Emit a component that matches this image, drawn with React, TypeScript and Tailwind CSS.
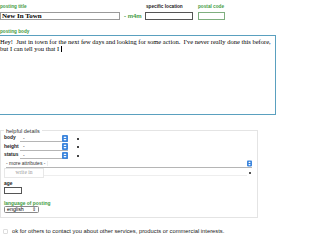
function Stepper({ w = 6 }: { w?: number }) {
  return (
    <svg width={w} height="7" viewBox="0 0 6 7" className="shrink-0">
      <rect x="0" y="0" width="6" height="7" rx="1" fill="#3d86dd" />
      <path d="M3 1.2 L4.6 2.9 L1.4 2.9 Z" fill="#fff" />
      <path d="M3 5.8 L4.6 4.1 L1.4 4.1 Z" fill="#fff" />
    </svg>
  );
}

function DetailRow({ label }: { label: string }) {
  return (
    <div className="flex h-[8.5px] items-center">
      <span className="w-[19px] pl-[3px] text-[4.9px] font-bold leading-none text-[#222]">{label}</span>
      <div className="flex h-[7px] w-[48px] items-center justify-between border-b border-[#b5b5b5]">
        <span className="pl-[3px] text-[5px] leading-none">-</span>
        <Stepper />
      </div>
      <span className="ml-[9px] h-[2px] w-[2px] bg-[#444]" />
    </div>
  );
}

export default function App() {
  return (
    <div className="h-[240px] w-[320px] overflow-hidden bg-white pt-[4px] font-['Liberation_Sans',Arial,sans-serif] text-[#222]">
      {/* top fields */}
      <div className="flex items-end">
        <div className="flex w-[120px] flex-col">
          <span className="h-[6px] text-[4.7px] font-bold leading-[6px] text-[#3f9b3f]">posting title</span>
          <div className="mt-[2px] flex h-[8px] items-center border border-[#9a9a9a] pl-[1px] font-['Liberation_Serif',serif] text-[7px] font-bold leading-none text-black">
            New In Town
          </div>
        </div>
        <span className="mb-[1px] w-[25px] pl-[4px] text-[6px] font-bold leading-[6px] text-[#3f9b3f]">- m4m</span>
        <div className="flex w-[48px] flex-col">
          <span className="h-[6px] pl-[1px] text-[4.7px] font-bold leading-[6px] text-[#222]">specific location</span>
          <div className="mt-[2px] h-[8px] border border-[#555]" />
        </div>
        <div className="ml-[5px] flex w-[27px] flex-col">
          <span className="h-[6px] text-[4.7px] font-bold leading-[6px] text-[#3f9b3f]">postal code</span>
          <div className="mt-[2px] h-[8px] border border-[#7fae7f]" />
        </div>
      </div>

      {/* posting body */}
      <div className="mt-[9px] h-[5px] text-[4.7px] font-bold leading-[5px] text-[#3f9b3f]">posting body</div>
      <div className="-ml-[1px] mt-[1px] h-[80px] w-[277px] overflow-hidden border border-[#5aa0bf] pt-[2px] font-['Liberation_Serif',serif] text-[6.5px] leading-[7px] whitespace-pre text-black">
        <div>{"Hey!  Just in town for the next few days and looking for some action.  I've never really done this before,"}</div>
        <div className="flex items-center">
          {"but I can tell you that I "}
          <span className="inline-block h-[6px] w-[0.7px] bg-black" />
        </div>
      </div>

      {/* helpful details */}
      <div className="relative mt-[15px] h-[88px] w-[258px] border border-[#e4e4e4]">
        <span className="absolute -top-[3.5px] left-[3px] bg-white px-[2px] text-[5.5px] leading-[6px] text-[#333]">helpful details</span>
        <div className="pt-[3.5px]">
          <DetailRow label="body" />
          <DetailRow label="height" />
          <DetailRow label="status" />
          <div className="ml-[5px] flex h-[8px] w-[246px] items-center justify-between border-b border-[#b5b5b5]">
            <span className="border-r border-[#eee] pr-[2px] text-[5px] leading-none text-[#333]">- more attributes -</span>
            <Stepper w={5} />
          </div>
          <div className="flex h-[10px] items-center">
            <div className="ml-[3px] flex h-[10px] w-[40px] items-center justify-center border border-[#e8e8e8] font-['Liberation_Serif',serif] text-[5.5px] leading-none text-[#999]">
              write in
            </div>
            <div className="mt-[4px] h-[1px] w-[203px] bg-[#eeeeee]" />
            <span className="ml-[2px] h-[2px] w-[2px] bg-[#555]" />
          </div>
          <div className="mt-[2.5px] h-[5px] pl-[3px] text-[4.9px] font-bold leading-[5px]">age</div>
          <div className="ml-[3px] mt-[1.5px] h-[7px] w-[18px] border border-[#555]" />
          <div className="mt-[6.5px] h-[5px] pl-[3px] text-[4.9px] font-bold leading-[5px] text-[#3f9b3f]">language of posting</div>
          <div className="ml-[3px] mt-[0.5px] flex h-[7px] w-[35px] items-center justify-between rounded-[1.5px] border border-[#888] px-[2px]">
            <span className="text-[5.3px] leading-none text-black">english</span>
            <span className="text-[5px] leading-none text-[#333]">⇕</span>
          </div>
        </div>
      </div>

      {/* contact opt-in */}
      <div className="mt-[11px] flex items-center">
        <span className="ml-[3px] h-[5px] w-[5px] rounded-[1px] border border-[#ddd]" />
        <span className="ml-[4px] text-[5.8px] leading-none text-[#222]">
          ok for others to contact you about other services, products or commercial interests.
        </span>
      </div>
    </div>
  );
}
